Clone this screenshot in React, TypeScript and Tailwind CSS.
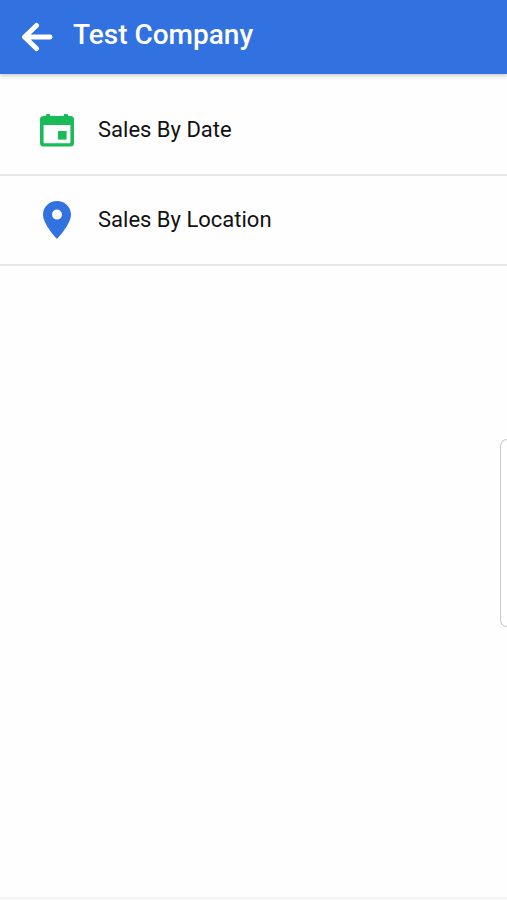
import React from 'react';

interface ReportItem {
    id: string;
    label: string;
    icon: React.ReactNode;
}

const BackIcon = () => (
    <svg viewBox="0 0 32 32" className="w-8 h-8" fill="none" stroke="currentColor" strokeWidth={5} strokeLinecap="round" strokeLinejoin="round" aria-hidden="true">
        <path d="M15.5 4.5 3.5 16l12 11.5M4.5 16H29" />
    </svg>
);

const CalendarIcon = () => (
    <svg viewBox="0 0 34 34" className="w-[34px] h-[34px]" fill="currentColor" aria-hidden="true">
        <path d="M6 4V2.200Q6 1 7.200 1h1.900q1.200 0 1.200 1.200V4zM23.700 4V2.200q0-1.200 1.200-1.200h1.900q1.200 0 1.200 1.200V4z" />
        <path fillRule="evenodd" d="M3.500 3h27A3.500 3.500 0 0 1 34 6.500v23.400a3.500 3.500 0 0 1-3.500 3.500h-27A3.500 3.500 0 0 1 0 29.900V6.500A3.500 3.500 0 0 1 3.500 3zM3.600 12v17.300q0 1 1 1h24.800q1 0 1-1V12z" />
        <path d="M18 18h8.600v8.600H18z" />
    </svg>
);

const PinIcon = () => (
    <svg viewBox="0 0 28 38" className="w-7 h-[38px]" fill="currentColor" aria-hidden="true">
        <path fillRule="evenodd" d="M14 0C6.200 0 0 6 0 13.500 0 23.500 14 38 14 38s14-14.500 14-24.500C28 6 21.800 0 14 0zm0 18.600a5 5 0 1 1 0-10 5 5 0 0 1 0 10z" />
    </svg>
);

const reports: ReportItem[] = [
    { id: 'date', label: 'Sales By Date', icon: <span className="text-[#18bb58]"><CalendarIcon /></span> },
    { id: 'location', label: 'Sales By Location', icon: <span className="text-[#3171e0]"><PinIcon /></span> },
];

const Header: React.FC<{ title: string }> = ({ title }) => (
    <header className="h-[74px] bg-[#3171e0] text-white flex items-center gap-5 px-[21px] pb-1 shadow-[0_2px_4px_rgba(0,0,0,0.2)]">
        <button type="button" aria-label="Back" className="mt-1">
            <BackIcon />
        </button>
        <h1 className="text-[28px] leading-8 font-medium">{title}</h1>
    </header>
);

const App: React.FC = () => {
    return (
        <div className="relative min-h-screen flex flex-col overflow-hidden bg-[#fefefe] font-['Roboto',sans-serif] text-[#111]">
            <Header title="Test Company" />

            <main className="flex-1 pt-3">
                <ul>
                    {reports.map((report) => (
                        <li key={report.id} className="border-b-2 border-[#e6e6e6]">
                            <button type="button" className="w-full h-[88px] pl-10 flex items-center gap-6 text-left">
                                <span className="w-[34px] flex justify-center flex-shrink-0">{report.icon}</span>
                                <span className="text-[22px] leading-[30px]">{report.label}</span>
                            </button>
                        </li>
                    ))}
                </ul>
            </main>

            <footer className="h-[3px] bg-[#f5f5f5]" />

            {/* Edge panel handle */}
            <div className="absolute right-0 top-[439px] w-[7px] h-[188px] rounded-l-lg border border-r-0 border-[#c8c8c8] bg-white" />
        </div>
    );
};

export default App;
